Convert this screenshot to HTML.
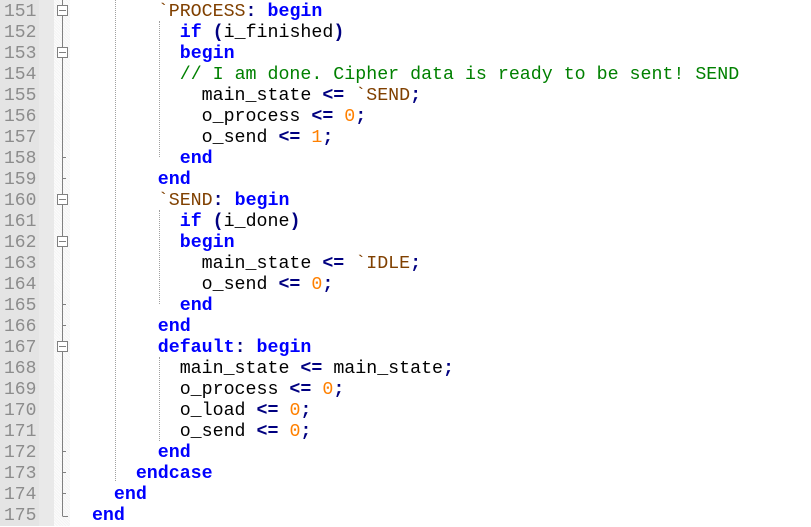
<!DOCTYPE html>
<html><head><meta charset="utf-8"><style>
body{margin:0;width:811px;height:526px;overflow:hidden;background:#fff;position:relative;font-family:"Liberation Mono","Courier New",monospace;font-size:18.3px;}
.gut{position:absolute;left:0;top:0;width:39px;height:526px;background:#e4e4e4}
.gut2{position:absolute;left:39px;top:0;width:15px;height:526px;background:#e9e9e9}
.fold{position:absolute;left:54px;top:0;width:16px;height:526px;background:repeating-linear-gradient(45deg,#f4f4f4 0 1px,#fcfcfc 1px 2px)}
.ln{position:absolute;left:4px;color:#8c8c8c;line-height:21px;height:21px;margin-top:2px;font-size:18px}
.c{position:absolute;left:70px;line-height:21px;height:21px;white-space:pre;color:#000;margin-top:2px}
.k{color:#0000ff;font-weight:bold}.o{color:#000080;font-weight:bold}.n{color:#ff8000}.d{color:#804000}.m{color:#008000}
.g{position:absolute;border-left:1px dotted #a0a0a0;width:0}
svg{position:absolute;left:54px;top:0}
</style></head><body>
<div class="gut"></div><div class="gut2"></div><div class="fold"></div>
<div class="g" style="left:115px;top:0;height:481px"></div>
<div class="g" style="left:159px;top:21px;height:136px"></div>
<div class="g" style="left:159px;top:210px;height:94px"></div>
<div class="g" style="left:159px;top:357px;height:84px"></div>
<svg width="16" height="526">
<g stroke="#808080" fill="none">
<line x1="8.5" y1="0" x2="8.5" y2="516"/>
<line x1="8.5" y1="516.5" x2="14" y2="516.5"/>
</g>
<g stroke="#808080" fill="#fff">
<rect x="3.5" y="5.5" width="10" height="10"/><rect x="3.5" y="47.5" width="10" height="10"/><rect x="3.5" y="194.5" width="10" height="10"/><rect x="3.5" y="236.5" width="10" height="10"/><rect x="3.5" y="341.5" width="10" height="10"/>
</g>
<g stroke="#808080">
<line x1="5" y1="10.5" x2="12" y2="10.5"/><line x1="5" y1="52.5" x2="12" y2="52.5"/><line x1="5" y1="199.5" x2="12" y2="199.5"/><line x1="5" y1="241.5" x2="12" y2="241.5"/><line x1="5" y1="346.5" x2="12" y2="346.5"/>
<line x1="8.5" y1="157.5" x2="12" y2="157.5"/><line x1="8.5" y1="178.5" x2="12" y2="178.5"/><line x1="8.5" y1="304.5" x2="12" y2="304.5"/><line x1="8.5" y1="325.5" x2="12" y2="325.5"/><line x1="8.5" y1="451.5" x2="12" y2="451.5"/><line x1="8.5" y1="472.5" x2="12" y2="472.5"/><line x1="8.5" y1="493.5" x2="12" y2="493.5"/>
</g>
</svg>
<div class="ln" style="top:0">151</div><div class="ln" style="top:21px">152</div><div class="ln" style="top:42px">153</div><div class="ln" style="top:63px">154</div><div class="ln" style="top:84px">155</div><div class="ln" style="top:105px">156</div><div class="ln" style="top:126px">157</div><div class="ln" style="top:147px">158</div><div class="ln" style="top:168px">159</div><div class="ln" style="top:189px">160</div><div class="ln" style="top:210px">161</div><div class="ln" style="top:231px">162</div><div class="ln" style="top:252px">163</div><div class="ln" style="top:273px">164</div><div class="ln" style="top:294px">165</div><div class="ln" style="top:315px">166</div><div class="ln" style="top:336px">167</div><div class="ln" style="top:357px">168</div><div class="ln" style="top:378px">169</div><div class="ln" style="top:399px">170</div><div class="ln" style="top:420px">171</div><div class="ln" style="top:441px">172</div><div class="ln" style="top:462px">173</div><div class="ln" style="top:483px">174</div><div class="ln" style="top:504px">175</div>
<div class="c" style="top:0">        <span class="d">`PROCESS</span><span class="o">:</span> <span class="k">begin</span></div>
<div class="c" style="top:21px">          <span class="k">if</span> <span class="o">(</span>i_finished<span class="o">)</span></div>
<div class="c" style="top:42px">          <span class="k">begin</span></div>
<div class="c" style="top:63px">          <span class="m">// I am done. Cipher data is ready to be sent! SEND</span></div>
<div class="c" style="top:84px">            main_state <span class="o">&lt;=</span> <span class="d">`SEND</span><span class="o">;</span></div>
<div class="c" style="top:105px">            o_process <span class="o">&lt;=</span> <span class="n">0</span><span class="o">;</span></div>
<div class="c" style="top:126px">            o_send <span class="o">&lt;=</span> <span class="n">1</span><span class="o">;</span></div>
<div class="c" style="top:147px">          <span class="k">end</span></div>
<div class="c" style="top:168px">        <span class="k">end</span></div>
<div class="c" style="top:189px">        <span class="d">`SEND</span><span class="o">:</span> <span class="k">begin</span></div>
<div class="c" style="top:210px">          <span class="k">if</span> <span class="o">(</span>i_done<span class="o">)</span></div>
<div class="c" style="top:231px">          <span class="k">begin</span></div>
<div class="c" style="top:252px">            main_state <span class="o">&lt;=</span> <span class="d">`IDLE</span><span class="o">;</span></div>
<div class="c" style="top:273px">            o_send <span class="o">&lt;=</span> <span class="n">0</span><span class="o">;</span></div>
<div class="c" style="top:294px">          <span class="k">end</span></div>
<div class="c" style="top:315px">        <span class="k">end</span></div>
<div class="c" style="top:336px">        <span class="k">default</span><span class="o">:</span> <span class="k">begin</span></div>
<div class="c" style="top:357px">          main_state <span class="o">&lt;=</span> main_state<span class="o">;</span></div>
<div class="c" style="top:378px">          o_process <span class="o">&lt;=</span> <span class="n">0</span><span class="o">;</span></div>
<div class="c" style="top:399px">          o_load <span class="o">&lt;=</span> <span class="n">0</span><span class="o">;</span></div>
<div class="c" style="top:420px">          o_send <span class="o">&lt;=</span> <span class="n">0</span><span class="o">;</span></div>
<div class="c" style="top:441px">        <span class="k">end</span></div>
<div class="c" style="top:462px">      <span class="k">endcase</span></div>
<div class="c" style="top:483px">    <span class="k">end</span></div>
<div class="c" style="top:504px">  <span class="k">end</span></div>
</body></html>
